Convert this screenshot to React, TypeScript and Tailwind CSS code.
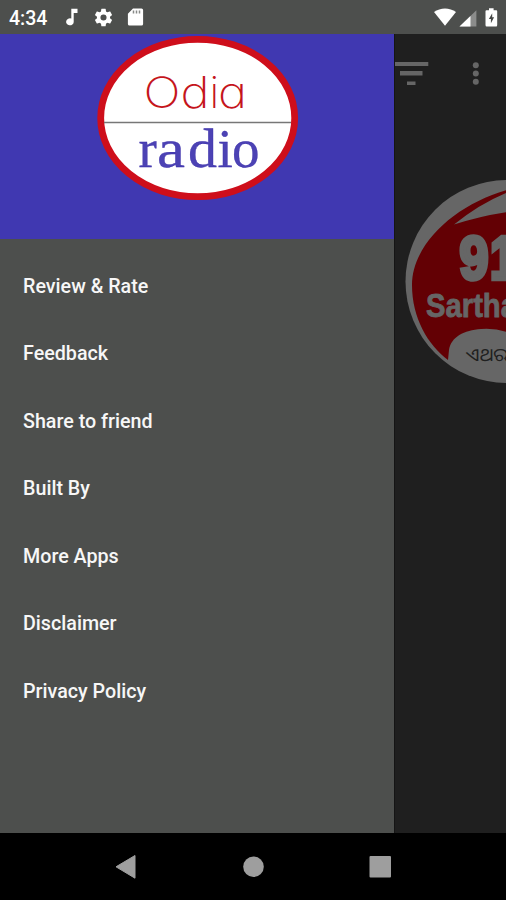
import React from "react";

const menu = [
  "Review & Rate",
  "Feedback",
  "Share to friend",
  "Built By",
  "More Apps",
  "Disclaimer",
  "Privacy Policy",
];

function StatusBar() {
  return (
    <header className="flex h-[34px] shrink-0 items-center justify-between bg-[#4d4f4d] pl-[9px] pr-[7px] text-white">
      <div className="flex items-center">
        <span className="w-[56px] pt-[3px] text-[19.5px] leading-none font-medium">4:34</span>
        <svg className="h-[20px] w-[16px]" viewBox="0 0 16 20" fill="#fff">
          <path d="M6.3 1.8h6.2v4.1H8.7v9a3.8 3.5 0 1 1-2.4-3.3z" />
        </svg>
        <svg className="ml-[12px] h-[21px] w-[21px]" viewBox="0 0 24 24" fill="#fff">
          <path d="M19.43 12.98c.04-.32.07-.64.07-.98s-.03-.66-.07-.98l2.11-1.65a.5.5 0 0 0 .12-.64l-2-3.46a.5.5 0 0 0-.61-.22l-2.49 1a7.3 7.3 0 0 0-1.69-.98l-.38-2.65A.49.49 0 0 0 14 2h-4a.49.49 0 0 0-.49.42l-.38 2.65c-.61.25-1.17.59-1.69.98l-2.49-1a.49.49 0 0 0-.61.22l-2 3.46a.49.49 0 0 0 .12.64l2.11 1.65c-.04.32-.07.65-.07.98s.03.66.07.98l-2.11 1.65a.5.5 0 0 0-.12.64l2 3.46c.12.22.39.3.61.22l2.49-1c.52.4 1.08.73 1.69.98l.38 2.65c.03.24.24.42.49.42h4c.25 0 .46-.18.49-.42l.38-2.65a7.3 7.3 0 0 0 1.69-.98l2.49 1c.23.09.49 0 .61-.22l2-3.46a.5.5 0 0 0-.12-.64zM12 15.5a3.5 3.5 0 1 1 0-7 3.5 3.5 0 0 1 0 7z" />
        </svg>
        <svg className="ml-[12px] h-[20px] w-[18px]" viewBox="0 0 18 20">
          <path d="M7 1.5h8.5a1.6 1.6 0 0 1 1.6 1.6v13.8a1.6 1.6 0 0 1-1.6 1.6h-12A1.6 1.6 0 0 1 1.9 17V6.8z" fill="#fff" />
          <path d="M7.5 3.5v3M10.5 3.5v3M13.5 3.5v3" stroke="#888a88" strokeWidth="1.5" />
        </svg>
      </div>
      <svg className="h-[22px] w-[66px]" viewBox="0 0 66 22">
        <path d="M1 6.1C7.5 1.4 16.5 1.4 23 6.1L12 19.8z" fill="#fff" />
        <path d="M26.5 20.5L43.4 4.2v16.3z" fill="#8b8c8b" />
        <path d="M26.5 20.5L37.5 9.9v10.6z" fill="#fff" />
        <path d="M56 2.2h4.6v2h2.6q1 0 1 1V19q0 1.5-1 1.5h-9.5q-1.2 0-1.2-1.5V5.2q0-1 1-1H56z" fill="#fff" />
        <path d="M59.2 7.2l-3.3 5.8h2v4.3l3.2-6h-1.9z" fill="#454745" />
      </svg>
    </header>
  );
}

function Logo() {
  return (
    <svg className="h-[166px] w-[204px]" viewBox="95 35 204 166">
      <ellipse cx="197.7" cy="118" rx="97" ry="78.7" fill="#fff" stroke="#ce0e1b" strokeWidth="6.8" />
      <path d="M104 122.5H291" stroke="#777" strokeWidth="1.3" />
      <text y="108" fontSize="43" fontWeight="200" fill="#c5151c" className="font-['Inter',sans-serif] [font-feature-settings:'cv11']">
        <tspan x="143.5" textLength="37" lengthAdjust="spacingAndGlyphs">O</tspan>
        <tspan x="180.5" textLength="29" lengthAdjust="spacingAndGlyphs">d</tspan>
        <tspan x="209.5">i</tspan>
        <tspan x="218" textLength="29" lengthAdjust="spacingAndGlyphs">a</tspan>
      </text>
      <text y="167" fontSize="55" fill="#4c42b4" stroke="#3023a5" strokeWidth=".3" className="font-['Liberation_Serif',serif]">
        <tspan x="138.5">r</tspan>
        <tspan x="157" textLength="28" lengthAdjust="spacingAndGlyphs">a</tspan>
        <tspan x="188" textLength="29" lengthAdjust="spacingAndGlyphs">d</tspan>
        <tspan x="217.5">i</tspan>
        <tspan x="232">o</tspan>
      </text>
    </svg>
  );
}

function StationBadge() {
  return (
    <svg className="mt-[65px] h-[208px] w-[112px]" viewBox="394 178 112 208">
      <defs>
        <clipPath id="disc">
          <circle cx="506" cy="281.5" r="101.5" />
        </clipPath>
      </defs>
      <circle cx="506" cy="281.5" r="101.5" fill="#666" />
      <g clipPath="url(#disc)">
        <path d="M506 190C456 204 411 243 411 285C411 318 427 345 447 360L448 350C450 337 463 330 480 329Q494 328 506 332V212Q479 216 453 224.5Q478 204 506 192.5z" fill="#630004" />
      </g>
      <text y="279" fontSize="62" fontWeight="700" fill="#666" stroke="#666" strokeWidth="4.5" className="font-['Liberation_Sans',sans-serif]">
        <tspan x="458.5" textLength="29" lengthAdjust="spacingAndGlyphs">9</tspan>
        <tspan x="489" textLength="27" lengthAdjust="spacingAndGlyphs">1</tspan>
      </text>
      <text x="425" y="317" textLength="91" lengthAdjust="spacingAndGlyphs" fontSize="33" fontWeight="700" fill="#666" stroke="#666" strokeWidth=".8" className="font-['Liberation_Sans',sans-serif]">
        Sartha
      </text>
      <text x="465" y="361" textLength="42" lengthAdjust="spacingAndGlyphs" fontSize="18" fill="#202020" className="font-['Noto_Sans_Oriya','Noto_Sans',sans-serif]">
        ଏଥର
      </text>
    </svg>
  );
}

export default function App() {
  return (
    <div className="flex h-[900px] w-[506px] flex-col overflow-hidden bg-black font-['Roboto',sans-serif]">
      <StatusBar />
      <div className="flex h-[799px] shrink-0">
        <aside className="flex w-[394px] shrink-0 flex-col bg-[#4d4f4d]">
          <div className="flex h-[205px] shrink-0 justify-center bg-[#4038b1] pt-px">
            <Logo />
          </div>
          <nav className="flex flex-col pt-[13.6px]">
            {menu.map((item) => (
              <a key={item} className="flex h-[67.5px] items-center pl-[23px] text-[19.7px] font-medium text-[#f7f7f7]">
                {item}
              </a>
            ))}
          </nav>
        </aside>
        <main className="flex w-[112px] flex-col border-l border-[#151515] bg-[#1f1f1f]">
          <div className="flex h-[79px] items-center">
            <svg className="h-[28px] w-[111px]" viewBox="395 60 111 28" fill="#666">
              <path d="M395 62h33.3v4H395zM400 71h22.5v4.5H400zM407 81.5h8.5V85H407z" />
              <circle cx="475.8" cy="65.3" r="3" />
              <circle cx="475.8" cy="73.5" r="3" />
              <circle cx="475.8" cy="81.8" r="3" />
            </svg>
          </div>
          <StationBadge />
        </main>
      </div>
      <footer className="flex grow items-center">
        <svg className="h-[67px] w-[506px]" viewBox="0 833 506 67" fill="#9e9e9e">
          <path d="M116 866.8L135 855.5V878.2z" stroke="#9e9e9e" strokeLinejoin="round" />
          <circle cx="253.5" cy="866.8" r="10.3" />
          <rect x="369.5" y="856" width="21.5" height="21.5" rx="1" />
        </svg>
      </footer>
    </div>
  );
}
